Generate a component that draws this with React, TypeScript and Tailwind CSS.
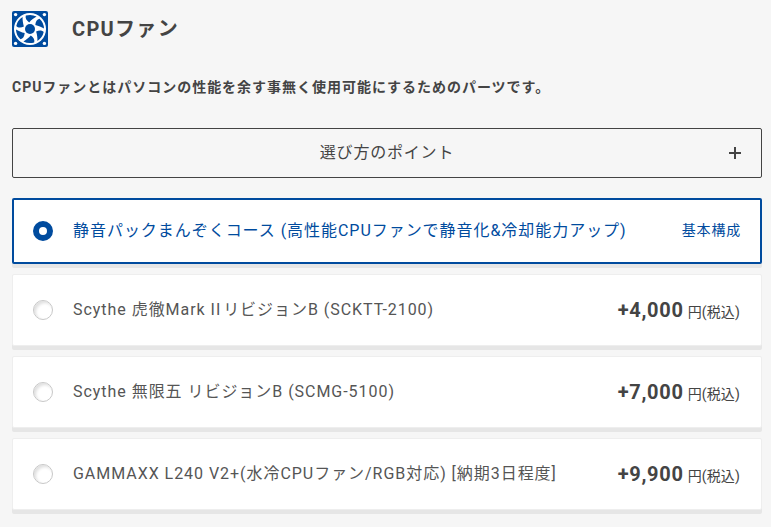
import type { ReactNode } from "react"

const FONT = "font-['Roboto','Noto_Sans_CJK_JP',sans-serif]"

const BLADE = "M17.2 11.4 C14.4 9.6 13 7 13.8 4.6 A14 14 0 0 1 24.6 5.6 C22 7 19.4 9 17.2 11.4Z"

const FanIcon = () => (
  <svg width="36" height="36" viewBox="0 0 36 36" className="shrink-0">
    <rect width="36" height="36" rx="2" fill="#004b9e" />
    <circle cx="18" cy="18" r="16" fill="#fff" />
    <circle cx="3.6" cy="3.6" r="1.7" fill="#fff" />
    <circle cx="32.4" cy="3.6" r="1.7" fill="#fff" />
    <circle cx="3.6" cy="32.4" r="1.7" fill="#fff" />
    <circle cx="32.4" cy="32.4" r="1.7" fill="#fff" />
    <g fill="#004b9e">
      {[0, 60, 120, 180, 240, 300].map((a) => (
        <path key={a} d={BLADE} transform={`rotate(${a} 18 18)`} />
      ))}
      <circle cx="18" cy="18" r="5" />
    </g>
  </svg>
)

const options: { id: string; name: ReactNode; price: string }[] = [
  {
    id: "scktt",
    name: (
      <>
        Scythe 虎徹<span className="-mr-[3px]">Mark II </span>リビジョンB (SCKTT-2100)
      </>
    ),
    price: "+4,000",
  },
  { id: "scmg", name: "Scythe 無限五 リビジョンB (SCMG-5100)", price: "+7,000" },
  { id: "gammaxx", name: "GAMMAXX L240 V2+(水冷CPUファン/RGB対応) [納期3日程度]", price: "+9,900" },
]

export default function App() {
  return (
    <div className={`${FONT} w-[771px] h-[527px] overflow-hidden bg-[#f6f6f6] px-3 pt-[11px] text-[#444] tracking-[0.05em]`}>
      <div className="flex items-center gap-6">
        <FanIcon />
        <h2 className="text-[20px] font-bold leading-[36px] tracking-[0.065em]">CPUファン</h2>
      </div>

      <p className="mt-[30px] text-[14px] font-bold leading-[20px] tracking-[0.07em]">
        CPUファンとはパソコンの性能を余す事無く使用可能にするためのパーツです。
      </p>

      <div className="relative mt-[31px] flex h-[50px] w-[750px] items-center justify-center rounded-[2px] border border-[#444] text-[16px]">
        選び方のポイント
        <svg width="12" height="12" viewBox="0 0 12 12" className="absolute right-[20px] top-[18px]">
          <path d="M6 0v12M0 6h12" stroke="#444" strokeWidth="2" />
        </svg>
      </div>

      <div className="mt-5 flex w-[750px] flex-col gap-[10px]">
        <div className="flex h-[66px] items-center rounded-[2px] border-2 border-[#004b9e] bg-white pl-[19px] pr-[19px] text-[#004b9e] shadow-[0_4px_0_#e6e6e6]">
          <span className="h-5 w-5 shrink-0 rounded-full border-[6px] border-[#004b9e] bg-white" />
          <span className="ml-[20px] text-[16px] tracking-[0.06em]">静音パックまんぞくコース (高性能CPUファンで静音化&amp;冷却能力アップ)</span>
          <span className="ml-auto pb-[2px] pl-px text-[14px]">基本構成</span>
        </div>

        {options.map((o) => (
          <div key={o.id} className="flex h-[72px] items-center rounded-[2px] border border-[#eee] bg-white pb-px pl-5 pr-[21px] shadow-[0_4px_0_#e6e6e6]">
            <span className="h-5 w-5 shrink-0 rounded-full border border-[#c8c8c8] bg-white shadow-[inset_2px_2px_3px_#e0e0e0]" />
            <span className="ml-[20px] text-[16px] tracking-[0.06em] text-[#555]">{o.name}</span>
            <span className="ml-auto flex items-baseline">
              <span className="text-[20px] font-bold tracking-[0.035em]">{o.price}</span>
              <span className="ml-1 text-[14px] tracking-[0.01em]">円(税込)</span>
            </span>
          </div>
        ))}
      </div>
    </div>
  )
}
